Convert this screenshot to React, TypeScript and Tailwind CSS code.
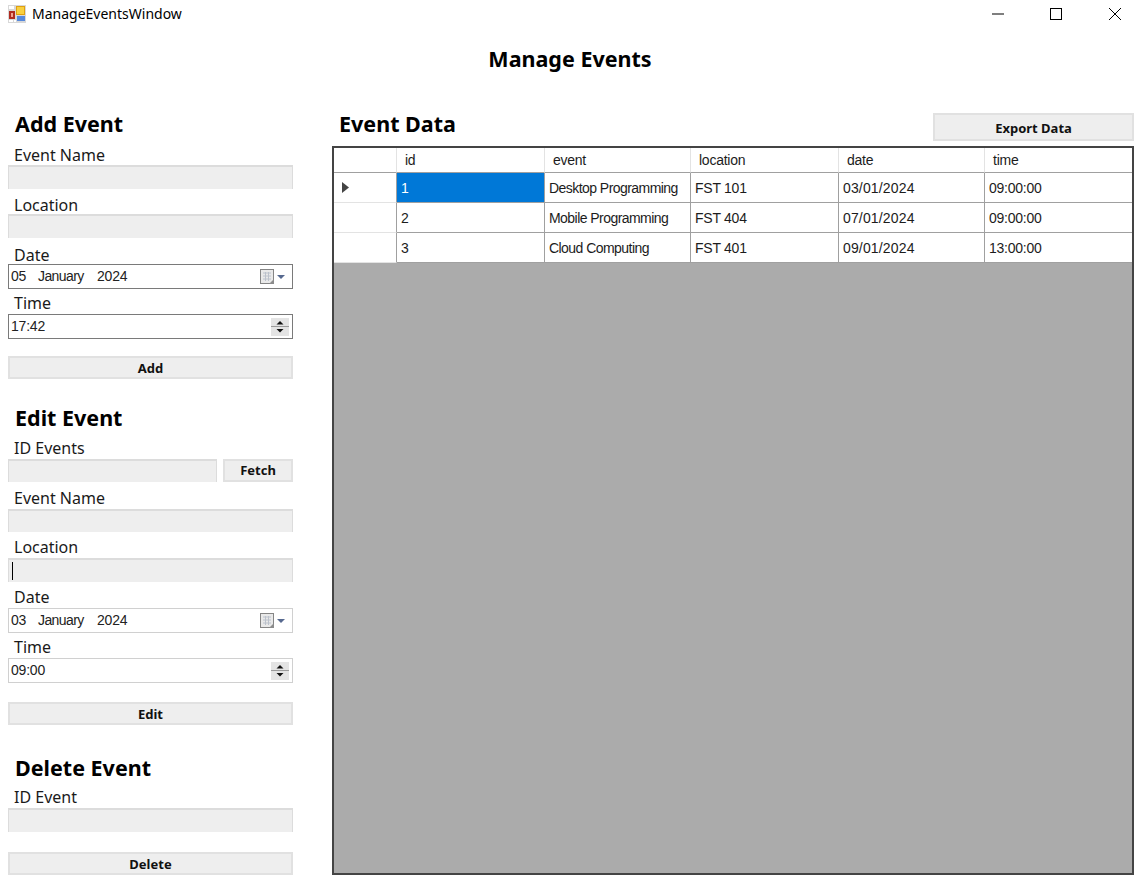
const uiFont = 'font-["Noto_Sans",sans-serif]';

const columns = ['id', 'event', 'location', 'date', 'time'];

const rows = [
  ['1', 'Desktop Programming', 'FST 101', '03/01/2024', '09:00:00'],
  ['2', 'Mobile Programming', 'FST 404', '07/01/2024', '09:00:00'],
  ['3', 'Cloud Computing', 'FST 401', '09/01/2024', '13:00:00'],
];

const cellTracking = ['', 'tracking-[-0.55px]', '', 'tracking-[0.15px]', ''];

const gridCols = 'grid grid-cols-[63px_148px_146px_148px_146px_147px]';

function AppIcon() {
  return (
    <svg width="18" height="18" viewBox="0 0 18 18" className="shrink-0">
      <rect x="0" y="0" width="18" height="18" fill="#d8d8d8" />
      <rect x="1" y="1" width="5" height="3" fill="#fff" />
      <rect x="8" y="1" width="9" height="9" fill="#e0a010" />
      <rect x="9" y="2" width="7" height="7" fill="#f8d040" />
      <rect x="1" y="6" width="6" height="8" fill="#b02a20" />
      <rect x="3" y="8" width="2" height="4" fill="#f0a090" />
      <rect x="9" y="11" width="8" height="5" fill="#5588dd" />
      <rect x="1" y="15" width="4" height="2" fill="#fff" />
      <rect x="6" y="15" width="2" height="2" fill="#fff" />
    </svg>
  );
}

function WindowControls() {
  return (
    <div className="flex items-start">
      <svg width="12" height="2" viewBox="0 0 12 2" className="mt-[13px]">
        <rect width="12" height="1" y="0.5" fill="#000" />
      </svg>
      <svg width="12" height="12" viewBox="0 0 12 12" className="mt-2 ml-[46px]">
        <rect x="0.5" y="0.5" width="11" height="11" fill="none" stroke="#000" />
      </svg>
      <svg width="12" height="12" viewBox="0 0 12 12" className="mt-2 ml-[47px] mr-[15px]">
        <path d="M0 0L12 12M12 0L0 12" stroke="#000" strokeWidth="1" />
      </svg>
    </div>
  );
}

function Heading({ children, className = '' }: { children: string; className?: string }) {
  return (
    <h2 className={`h-6 pl-[7px] text-[21.5px] leading-6 font-bold text-black ${className}`}>{children}</h2>
  );
}

function Label({ children, className = '' }: { children: string; className?: string }) {
  return <div className={`pl-[6px] text-[16px] leading-[18px] text-[#1a1a1a] ${className}`}>{children}</div>;
}

function TextBox({ className = 'h-6', caret }: { className?: string; caret?: boolean }) {
  return (
    <div className={`flex items-center border-x border-t-2 border-x-[#dcdcdc] border-t-[#dcdcdc] bg-[#eeeeee] pl-[3px] ${className}`}>
      {caret && <div className="h-[18px] w-px bg-black" />}
    </div>
  );
}

function Button({ children, className = 'h-[23px]' }: { children: string; className?: string }) {
  return (
    <button className={`flex items-center justify-center border-2 border-[#e1e1e1] bg-[#eeeeee] text-[13px] font-bold text-[#111] ${className}`}>
      {children}
    </button>
  );
}

function CalendarIcon() {
  return (
    <svg width="25" height="16" viewBox="0 0 25 16">
      <rect x="0.5" y="0.5" width="13" height="14" fill="#e9e9e9" stroke="#858585" />
      <path d="M3 4H11M3 7H11M3 10H11M5.5 3V12M8.5 3V12" stroke="#bcc2cc" strokeWidth="1" />
      <path d="M9 15L14 10V15Z" fill="#8c8c8c" />
      <path d="M17 6H25L21 10Z" fill="#56698f" />
    </svg>
  );
}

function SpinIcon() {
  return (
    <svg width="18" height="18" viewBox="0 0 18 18">
      <rect width="18" height="18" fill="#e4e4e4" />
      <rect y="8" width="18" height="1" fill="#9a9a9a" />
      <path d="M9 3L12.5 6.5H5.5Z" fill="#111" />
      <path d="M5.5 11H12.5L9 14.5Z" fill="#111" />
    </svg>
  );
}

function DateBox({ day, dark }: { day: string; dark?: boolean }) {
  return (
    <div className={`flex h-[25px] items-center border ${dark ? 'border-[#7a7a7a]' : 'border-[#d0d0d0]'} bg-white pl-[2px] font-["Liberation_Sans",sans-serif] text-[14px] tracking-[-0.2px] text-[#222]`}>
      <span className="w-[27px]">{day}</span>
      <span className="w-[59px] tracking-[-0.6px]">January</span>
      <span>2024</span>
      <div className="ml-auto mr-[7px] flex items-center">
        <CalendarIcon />
      </div>
    </div>
  );
}

function TimeBox({ value, dark }: { value: string; dark?: boolean }) {
  return (
    <div className={`flex h-[25px] items-center border ${dark ? 'border-[#7a7a7a]' : 'border-[#d0d0d0]'} bg-white pl-[2px] font-["Liberation_Sans",sans-serif] text-[14px] tracking-[-0.2px] text-[#222]`}>
      <span>{value}</span>
      <div className="ml-auto mr-[3px] flex items-center">
        <SpinIcon />
      </div>
    </div>
  );
}

function Sidebar() {
  return (
    <div className="flex w-[332px] shrink-0 flex-col pl-2 pr-[39px]">
      <Heading>Add Event</Heading>
      <Label className="mt-[9px] h-5 pt-px">Event Name</Label>
      <TextBox />
      <Label className="mt-[6px] h-[19px] pt-px">Location</Label>
      <TextBox />
      <Label className="mt-[7px] h-[19px] pt-px">Date</Label>
      <DateBox day="05" dark />
      <Label className="mt-[5px] h-5">Time</Label>
      <TimeBox value="17:42" dark />
      <Button className="mt-[17px] h-[23px] pt-[2px]">Add</Button>

      <Heading className="mt-[27px]">Edit Event</Heading>
      <Label className="mt-[9px] h-5">ID Events</Label>
      <div className="flex gap-[6px]">
        <TextBox className="h-[23px] w-[209px]" />
        <Button className="h-[23px] w-[70px]">Fetch</Button>
      </div>
      <Label className="mt-[7px] h-5">Event Name</Label>
      <TextBox className="h-[23px]" />
      <Label className="mt-[6px] h-5">Location</Label>
      <TextBox caret />
      <Label className="mt-[6px] h-5">Date</Label>
      <DateBox day="03" />
      <Label className="mt-[5px] h-5">Time</Label>
      <TimeBox value="09:00" />
      <Button className="mt-[19px] h-[23px] pt-[2px]">Edit</Button>

      <Heading className="mt-[31px]">Delete Event</Heading>
      <Label className="mt-2 h-5">ID Event</Label>
      <TextBox />
      <Button className="mt-5 h-[23px] pt-[2px]">Delete</Button>
    </div>
  );
}

function DataGrid() {
  return (
    <div className="h-[729px] border-2 border-[#444] bg-[#ababab] font-['Liberation_Sans',sans-serif] text-[14px] tracking-[-0.25px] text-[#1c1c1c]">
      <div className={`${gridCols} h-[25px] bg-white`}>
        <div className="border-r border-b border-r-[#e3e3e3] border-b-[#a0a0a0]" />
        {columns.map((col, i) => (
          <div
            key={col}
            className={`flex items-center border-b border-b-[#a0a0a0] pl-2 ${i < columns.length - 1 ? 'border-r border-r-[#e3e3e3]' : ''}`}
          >
            {col}
          </div>
        ))}
      </div>
      {rows.map((row, r) => (
        <div key={row[0]} className={`${gridCols} h-[30px] bg-white`}>
          <div className="flex items-center border-r border-b border-r-[#a0a0a0] border-b-[#e3e3e3] pl-2">
            {r === 0 && (
              <svg width="7" height="11" viewBox="0 0 7 11">
                <path d="M0 0L7 5.5L0 11Z" fill="#444" />
              </svg>
            )}
          </div>
          {row.map((cell, c) => (
            <div
              key={c}
              className={`flex items-center border-b border-b-[#a0a0a0] pl-1 pt-px ${cellTracking[c]} ${c < row.length - 1 ? 'border-r border-r-[#a0a0a0]' : ''} ${r === 0 && c === 0 ? 'bg-[#0078d7] text-white' : ''}`}
            >
              {cell}
            </div>
          ))}
        </div>
      ))}
    </div>
  );
}

export default function App() {
  return (
    <div className={`flex h-[887px] w-[1136px] flex-col overflow-hidden bg-white ${uiFont}`}>
      <div className="flex h-7 items-start justify-between">
        <div className="flex items-center gap-[6px] pl-2 pt-1">
          <AppIcon />
          <span className="text-[14px] leading-5 text-black">ManageEventsWindow</span>
        </div>
        <WindowControls />
      </div>
      <h1 className="h-[84px] pt-[17px] pl-[28px] pr-[24px] text-center text-[21.5px] leading-7 font-bold text-black">Manage Events</h1>
      <div className="flex flex-1">
        <Sidebar />
        <div className="flex w-[802px] flex-col">
          <div className="flex h-[34px] items-start justify-between">
            <h2 className="pl-[7px] text-[21.5px] leading-6 font-bold text-black">Event Data</h2>
            <Button className="mt-px h-7 w-[201px] pt-[3px]">Export Data</Button>
          </div>
          <DataGrid />
        </div>
      </div>
    </div>
  );
}
